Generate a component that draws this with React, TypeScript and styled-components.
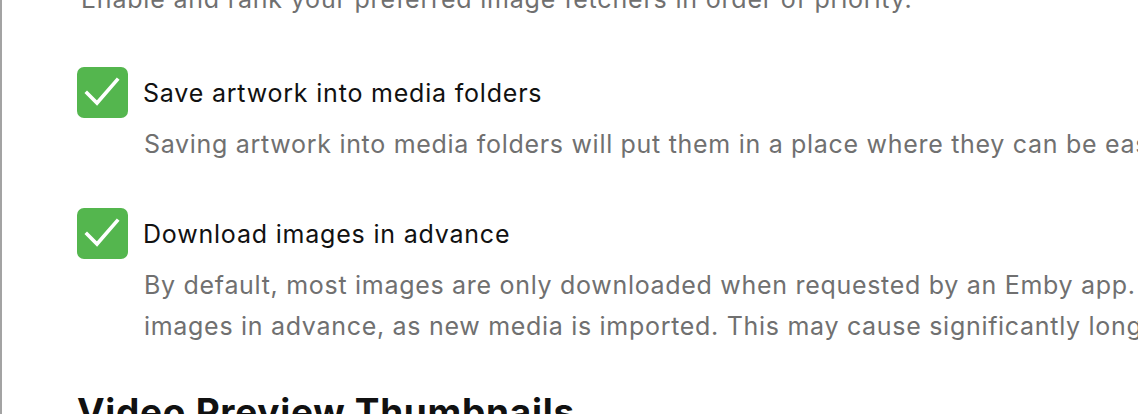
import styled, { createGlobalStyle } from "styled-components";

const GlobalStyle = createGlobalStyle`
  html, body {
    margin: 0;
    padding: 0;
    background: #fff;
  }
  body {
    font-family: Inter, "Noto Sans", "Liberation Sans", sans-serif;
    -webkit-font-smoothing: antialiased;
  }
`;

const Page = styled.div`
  height: 414px;
  overflow: hidden;
  box-sizing: border-box;
  border-left: 2px solid #a3a3a3;
  padding-left: 75px;
`;

const Note = styled.p`
  margin: -22px 0 0;
  padding-left: 4px;
  font-size: 25px;
  line-height: 42px;
  letter-spacing: 0.8px;
  color: #707070;
  white-space: nowrap;
`;

const Option = styled.section<{ $top: number }>`
  margin-top: ${(p) => p.$top}px;
`;

const Row = styled.label`
  display: flex;
  align-items: center;
  gap: 15px;
  cursor: pointer;
`;

const Box = styled.span`
  flex: none;
  width: 51px;
  height: 51px;
  border-radius: 7px;
  background: #54b64e;
  display: flex;
  align-items: center;
  justify-content: center;
`;

const Label = styled.span`
  font-size: 25px;
  line-height: 51px;
  padding-top: 3px;
  letter-spacing: 0.8px;
  color: #111;
  white-space: nowrap;
`;

const Desc = styled.p`
  margin: 5px 0 0;
  padding-left: 67px;
  font-size: 25px;
  line-height: 41px;
  letter-spacing: 0.7px;
  color: #707070;
  white-space: nowrap;
`;

const Heading = styled.h2`
  margin: 44px 0 0;
  font-size: 37px;
  line-height: 42px;
  font-weight: 700;
  letter-spacing: 0.7px;
  color: #111;
  white-space: nowrap;
`;

const Check = () => (
  <svg width="51" height="51" viewBox="0 0 51 51">
    <path
      d="M10 26 L20 36 L40 13"
      fill="none"
      stroke="#fff"
      strokeWidth="3.6"
      strokeLinecap="square"
      strokeLinejoin="miter"
    />
  </svg>
);

const CheckOption = ({
  top,
  label,
  lines,
}: {
  top: number;
  label: string;
  lines: string[];
}) => (
  <Option $top={top}>
    <Row>
      <Box>
        <Check />
      </Box>
      <Label>{label}</Label>
    </Row>
    <Desc>
      {lines.map((l, i) => (
        <span key={i}>
          {i > 0 && <br />}
          {l}
        </span>
      ))}
    </Desc>
  </Option>
);

export default function App() {
  return (
    <>
      <GlobalStyle />
      <Page>
        <Note>Enable and rank your preferred image fetchers in order of priority.</Note>
        <CheckOption
          top={45}
          label="Save artwork into media folders"
          lines={[
            "Saving artwork into media folders will put them in a place where they can be easily edited.",
          ]}
        />
        <CheckOption
          top={41}
          label="Download images in advance"
          lines={[
            "By default, most images are only downloaded when requested by an Emby app. Enable this option to download all",
            "images in advance, as new media is imported. This may cause significantly longer library scans.",
          ]}
        />
        <Heading>Video Preview Thumbnails</Heading>
      </Page>
    </>
  );
}
